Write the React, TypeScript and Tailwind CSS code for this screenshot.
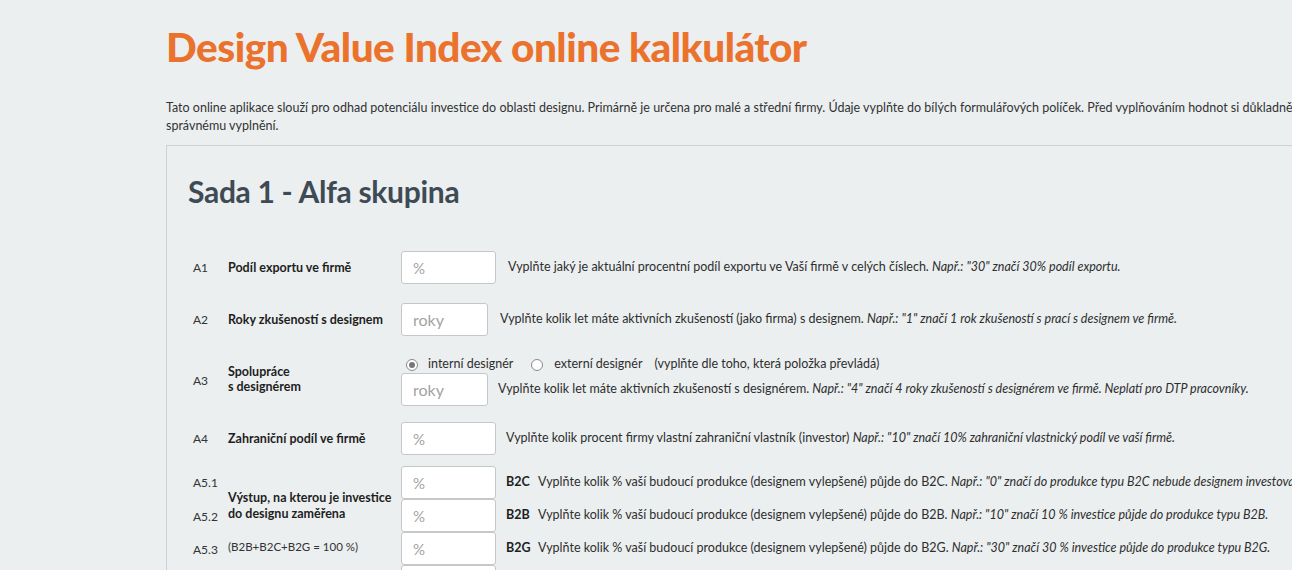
import React from 'react';

const font = { fontFamily: 'Lato, "Noto Sans", sans-serif' };

function Field({ w, ph, big }: { w: string; ph: string; big?: boolean }) {
  return (
    <input
      placeholder={ph}
      className={`${w} h-[33px] shrink-0 rounded-[3px] border border-[#c4c8ca] bg-white px-[11px] text-[#333] outline-none placeholder:text-[#a3a3a3] ${big ? 'text-[16px]' : 'text-[15px]'}`}
    />
  );
}

function Radio({ on }: { on?: boolean }) {
  return (
    <span className="flex h-[12px] w-[12px] items-center justify-center rounded-full border border-[#8a8a8a] bg-white">
      {on && <span className="h-[6px] w-[6px] rounded-full bg-[#777]" />}
    </span>
  );
}

function Row({ code, label, children }: { code: string; label: React.ReactNode; children: React.ReactNode }) {
  return (
    <div className="flex items-center">
      <div className="w-[35px] shrink-0 text-[12px] text-[#333]">{code}</div>
      <div className="w-[173px] shrink-0 text-[12.5px] font-bold leading-[15px] text-[#1e1e1e]">{label}</div>
      {children}
    </div>
  );
}

const help = 'text-[12.5px] text-[#2e2e2e] whitespace-nowrap';

export default function App() {
  return (
    <div className="h-[570px] w-[1292px] overflow-hidden bg-[#ebeff0]" style={font}>
      <div className="ml-[166px] w-[1300px]">
        <h1 className="pt-[22px] text-[40.5px] font-black leading-[50px] tracking-[-0.5px] text-[#eb722d]">
          Design Value Index online kalkulátor
        </h1>
        <p className="mt-[27px] whitespace-nowrap text-[12.5px] leading-[18px] text-[#333]">
          Tato online aplikace slouží pro odhad potenciálu investice do oblasti designu. Primárně je určena pro malé a
          střední firmy. Údaje vyplňte do bílých formulářových políček. Před vyplňováním hodnot si důkladně přečtěte pokyny ke
          <br />
          správnému vyplnění.
        </p>

        <div className="mt-[10px] border-l border-t border-[#cdd1d3] pl-[21px]">
          <h2 className="pt-[25px] text-[30px] font-bold leading-[40px] tracking-[-0.3px] text-[#3e4a54]">
            Sada 1 - Alfa skupina
          </h2>

          <div className="ml-[5px] mt-[40px] flex flex-col">
            <Row code="A1" label="Podíl exportu ve firmě">
              <Field w="w-[95px]" ph="%" />
              <span className={`${help} ml-[12px]`}>
                Vyplňte jaký je aktuální procentní podíl exportu ve Vaší firmě v celých číslech.{' '}
                <i>Např.: "30" značí 30% podíl exportu.</i>
              </span>
            </Row>

            <div className="mt-[19px]">
              <Row code="A2" label="Roky zkušeností s designem">
                <Field w="w-[87px]" ph="roky" big />
                <span className={`${help} ml-[12px]`}>
                  Vyplňte kolik let máte aktivních zkušeností (jako firma) s designem.{' '}
                  <i>Např.: "1" značí 1 rok zkušeností s prací s designem ve firmě.</i>
                </span>
              </Row>
            </div>

            <div className="mt-[20px]">
              <Row
                code="A3"
                label={
                  <div className="pb-[5px]">
                    Spolupráce
                    <br />s designérem
                  </div>
                }
              >
                <div className="flex flex-col">
                  <div className="flex h-[17px] items-center text-[12.5px] text-[#2e2e2e]">
                    <span className="ml-[5px]"><Radio on /></span>
                    <span className="ml-[10px]">interní designér</span>
                    <span className="ml-[18px]"><Radio /></span>
                    <span className="ml-[11px]">externí designér</span>
                    <span className="ml-[12px]">(vyplňte dle toho, která položka převládá)</span>
                  </div>
                  <div className="flex items-center">
                    <Field w="w-[87px]" ph="roky" big />
                    <span className={`${help} ml-[10px]`}>
                      Vyplňte kolik let máte aktivních zkušeností s designérem.{' '}
                      <i>Např.: "4" značí 4 roky zkušeností s designérem ve firmě. Neplatí pro DTP pracovníky.</i>
                    </span>
                  </div>
                </div>
              </Row>
            </div>

            <div className="mt-[16px]">
              <Row code="A4" label="Zahraniční podíl ve firmě">
                <Field w="w-[95px]" ph="%" />
                <span className={`${help} ml-[10px]`}>
                  Vyplňte kolik procent firmy vlastní zahraniční vlastník (investor){' '}
                  <i>Např.: "10" značí 10% zahraniční vlastnický podíl ve vaší firmě.</i>
                </span>
              </Row>
            </div>

            <div className="mt-[11px] flex">
              <div className="flex w-[35px] shrink-0 flex-col text-[12px] text-[#333]">
                <div className="flex h-[33px] items-center">A5.1</div>
                <div className="flex h-[33px] items-center pt-[2px]">A5.2</div>
                <div className="flex h-[33px] items-center pt-[2px]">A5.3</div>
              </div>
              <div className="flex w-[173px] shrink-0 flex-col">
                <div className="pt-[24px] text-[12.5px] font-bold leading-[16px] text-[#1e1e1e]">
                  Výstup, na kterou je investice
                  <br />
                  do designu zaměřena
                </div>
                <div className="mt-[17px] text-[11.5px] leading-[16px] text-[#333]">(B2B+B2C+B2G = 100 %)</div>
              </div>
              <div className="flex flex-col">
                {[
                  ['B2C', 'B2C', '"0" značí do produkce typu B2C nebude designem investováno.'],
                  ['B2B', 'B2B', '"10" značí 10 % investice půjde do produkce typu B2B.'],
                  ['B2G', 'B2G', '"30" značí 30 % investice půjde do produkce typu B2G.'],
                ].map(([tag, t, ex]) => (
                  <div key={tag} className="flex h-[33px] items-center">
                    <Field w="w-[95px]" ph="%" />
                    <span className={`${help} ml-[10px] flex`}>
                      <b className="w-[32px] text-[#1e1e1e]">{tag}</b>
                      <span>
                        Vyplňte kolik % vaší budoucí produkce (designem vylepšené) půjde do {t}. <i>Např.: {ex}</i>
                      </span>
                    </span>
                  </div>
                ))}
                <div className="flex h-[33px] items-center">
                  <Field w="w-[95px]" ph="" />
                </div>
              </div>
            </div>
          </div>
        </div>
      </div>
    </div>
  );
}
